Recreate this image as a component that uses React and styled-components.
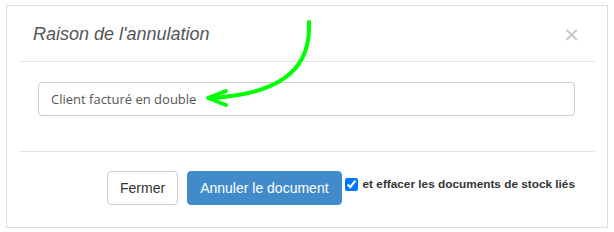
import styled, { createGlobalStyle } from 'styled-components';

const Global = createGlobalStyle`
  body {
    margin: 0;
    background: #fff;
    font-family: "Liberation Sans", Arial, sans-serif;
  }
`;

const Page = styled.div`
  position: relative;
  padding: 5px 6px;
  width: 614px;
  height: 232px;
  box-sizing: border-box;
`;

const Frame = styled.div`
  width: 602px;
  height: 223px;
  box-sizing: border-box;
  border: 1px solid #dddddd;
  display: flex;
  flex-direction: column;
`;

const Header = styled.div`
  display: flex;
  justify-content: space-between;
  align-items: center;
  height: 55px;
  margin: 0 12px;
  padding: 0 15px 0 14px;
  border-bottom: 1px solid #e5e5e5;
`;

const Title = styled.h4`
  margin: 0;
  padding-top: 2px;
  font-size: 18px;
  font-weight: normal;
  font-style: italic;
  color: #555;
`;

const Close = styled.button`
  border: 0;
  background: none;
  padding: 0;
  font-size: 20px;
  line-height: 1;
  font-weight: normal;
  color: #c4c4c4;
  cursor: pointer;
  font-family: "DejaVu Sans", sans-serif;
`;

const Body = styled.div`
  margin: 0 12px;
  padding: 20px 20px 35px 19px;
  border-bottom: 1px solid #e5e5e5;
`;

const Input = styled.input`
  display: block;
  width: 100%;
  height: 34px;
  box-sizing: border-box;
  padding: 0 12px;
  border: 1px solid #cccccc;
  border-radius: 4px;
  font-family: "Open Sans", "Noto Sans", sans-serif;
  font-size: 13px;
  color: #555;
  outline: none;
`;

const Footer = styled.div`
  display: flex;
  justify-content: flex-end;
  align-items: center;
  padding: 19px 32px 0 0;
`;

const Button = styled.button`
  height: 34px;
  padding: 0 12px;
  margin-right: ${(p) => (p.$gap ? '9px' : '0')};
  border-radius: 4px;
  font-family: "Liberation Sans", Arial, sans-serif;
  font-size: 14px;
  cursor: pointer;
  border: 1px solid ${(p) => (p.$primary ? '#428bca' : '#cccccc')};
  background: ${(p) => (p.$primary ? '#428bca' : '#ffffff')};
  color: ${(p) => (p.$primary ? '#ffffff' : '#333333')};
`;

const CheckLabel = styled.label`
  display: flex;
  align-items: center;
  align-self: flex-start;
  margin-top: 6px;
  font-size: 11.8px;
  font-weight: bold;
  color: #333;
`;

const Check = styled.input`
  margin: 0 5px 0 3px;
  width: 13px;
  height: 13px;
`;

const Arrow = styled.svg`
  position: absolute;
  left: 0;
  top: 0;
  pointer-events: none;
`;

export default function App() {
  return (
    <>
      <Global />
      <Page>
        <Frame>
          <Header>
            <Title>Raison de l'annulation</Title>
            <Close aria-label="close">×</Close>
          </Header>
          <Body>
            <Input defaultValue="Client facturé en double" />
          </Body>
          <Footer>
            <Button $gap>Fermer</Button>
            <Button $primary>Annuler le document</Button>
            <CheckLabel>
              <Check type="checkbox" defaultChecked />
              et effacer les documents de stock liés
            </CheckLabel>
          </Footer>
        </Frame>
        <Arrow width="614" height="232" viewBox="0 0 614 232">
          <path
            d="M309 22 C311 62 290 94 210 98"
            fill="none"
            stroke="#00ff00"
            strokeWidth="4"
            strokeLinecap="round"
          />
          <path
            d="M226 91 L208 98 L226 105"
            fill="none"
            stroke="#00ff00"
            strokeWidth="4"
            strokeLinecap="round"
            strokeLinejoin="round"
          />
        </Arrow>
      </Page>
    </>
  );
}
